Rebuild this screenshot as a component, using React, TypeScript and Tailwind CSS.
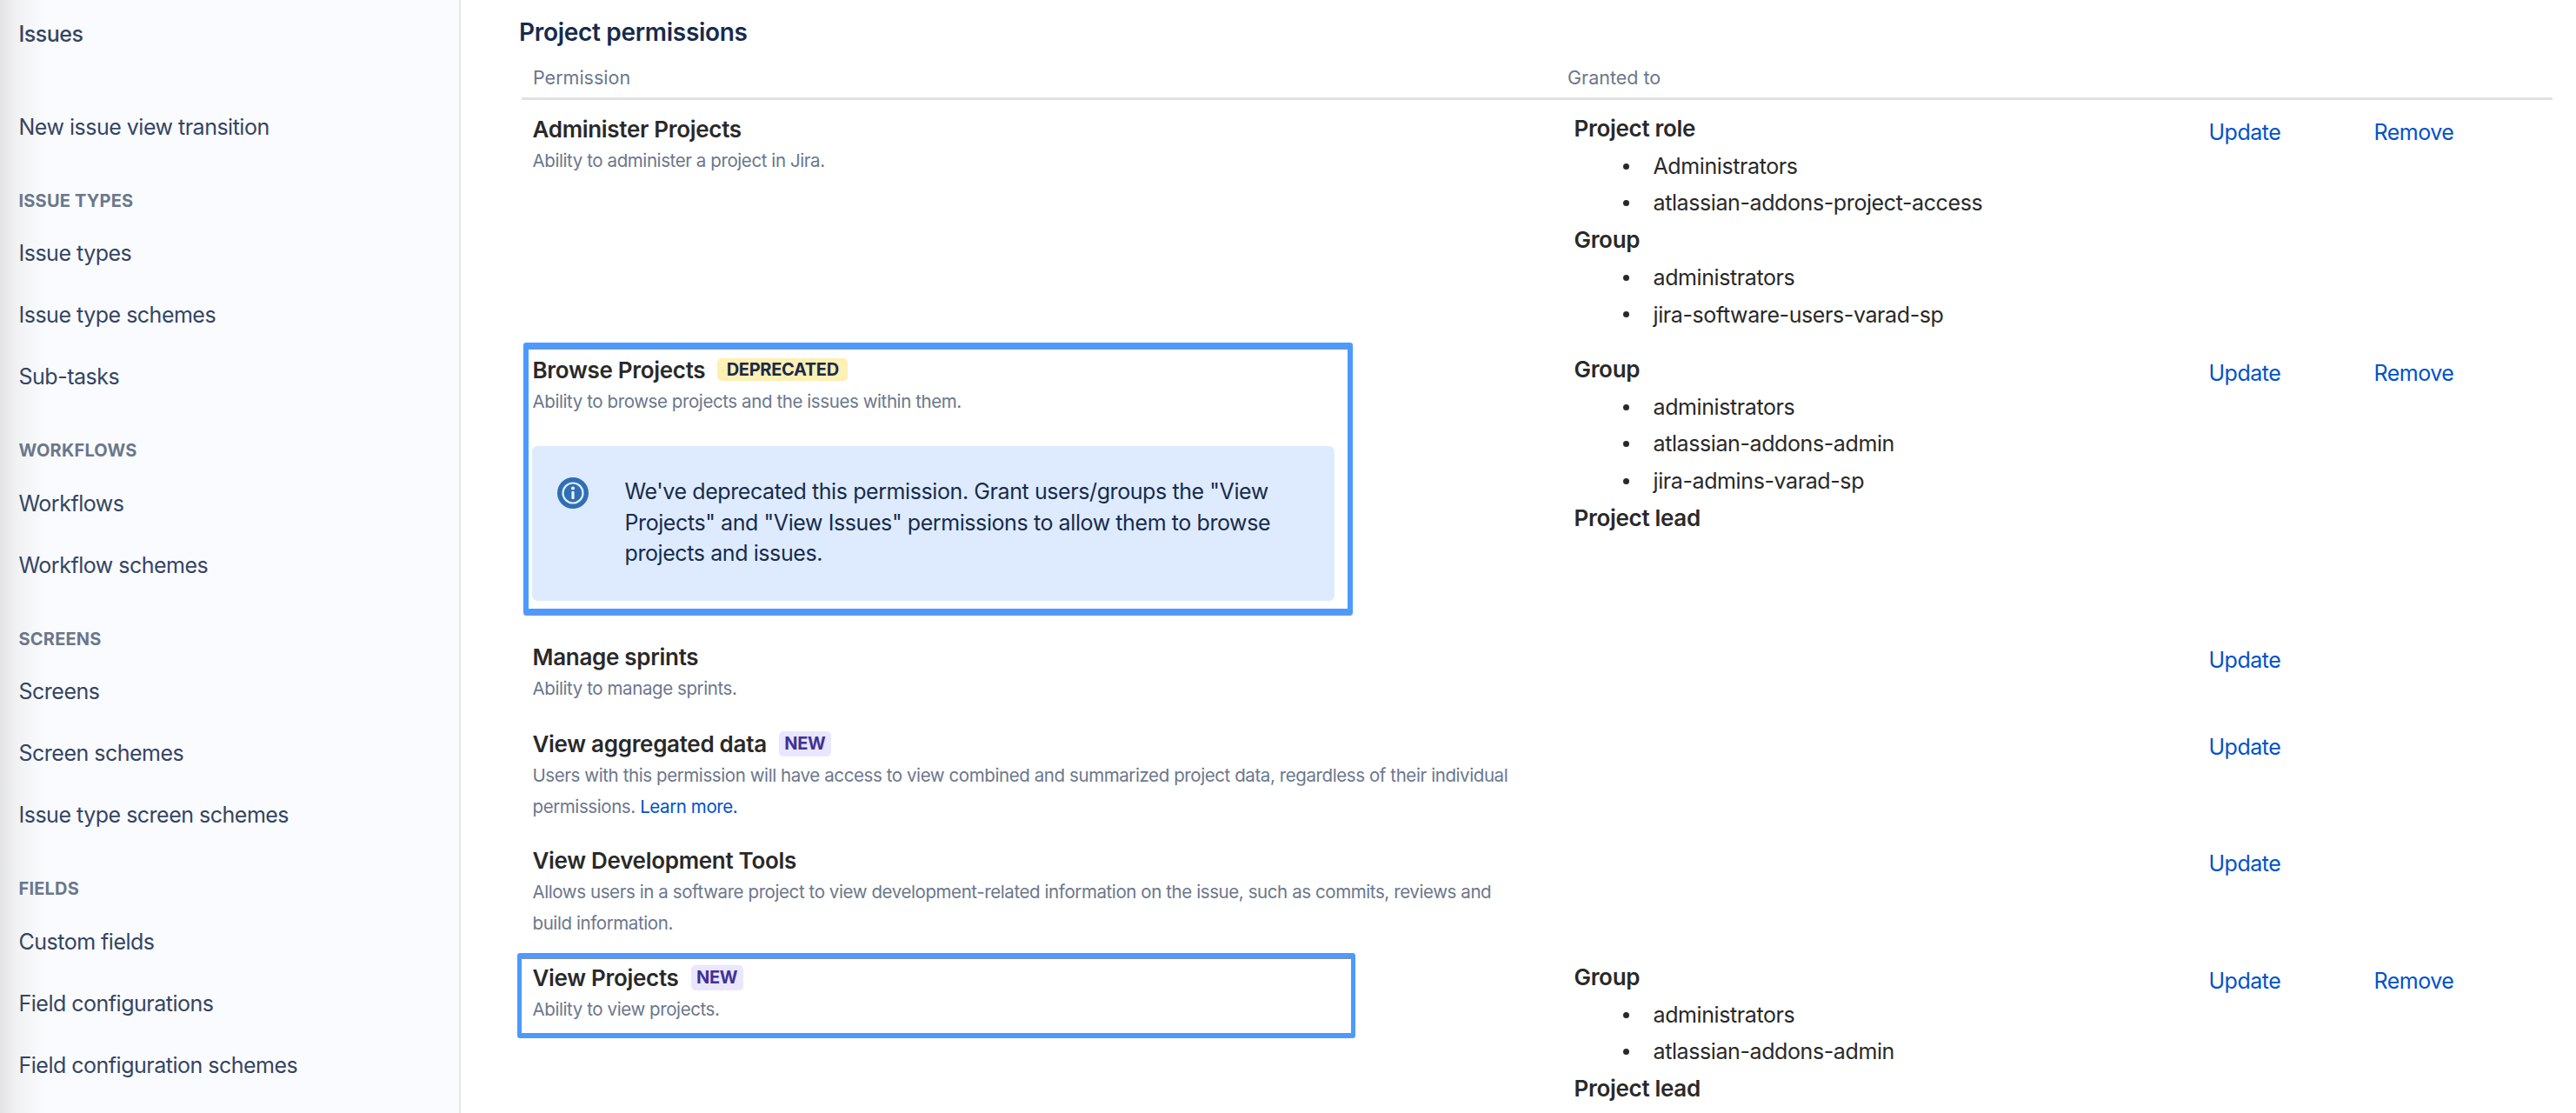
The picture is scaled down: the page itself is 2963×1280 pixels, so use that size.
import React from "react";

const NAV: { heading?: string; items: string[] }[] = [
  { heading: "ISSUE TYPES", items: ["Issue types", "Issue type schemes", "Sub-tasks"] },
  { heading: "WORKFLOWS", items: ["Workflows", "Workflow schemes"] },
  { heading: "SCREENS", items: ["Screens", "Screen schemes", "Issue type screen schemes"] },
  { heading: "FIELDS", items: ["Custom fields", "Field configurations", "Field configuration schemes"] },
];

function NavItem({ label, weight }: { label: string; weight?: string }) {
  return <div className={`flex h-[71px] items-center text-[25px] tracking-[-0.5px] text-[#344563] ${weight ?? ""}`}>{label}</div>;
}

function Sidebar() {
  return (
    <aside className="h-full w-[530px] shrink-0 overflow-hidden border-r-[2px] border-[#e6e7ea] bg-[linear-gradient(90deg,#e3e3e4_0px,#f1f2f3_20px,#fafbfe_52px)] pl-[21.5px] pt-[4px]">
      <NavItem label="Issues" weight="font-medium" />
      <div className="mt-[36px]">
        <NavItem label="New issue view transition" />
      </div>
      {NAV.map((s) => (
        <div key={s.heading} className="mt-[22.5px]">
          <div className="flex h-[52px] items-center text-[20px] font-bold tracking-[0.2px] text-[#6b778c]">{s.heading}</div>
          {s.items.map((i) => (
            <NavItem key={i} label={i} />
          ))}
        </div>
      ))}
    </aside>
  );
}

function Badge({ kind, children }: { kind: "new" | "deprecated"; children: React.ReactNode }) {
  const cls =
    kind === "new"
      ? "bg-[#eae6ff] text-[#403294] w-[60px] h-[29px]"
      : "bg-[#fff0b3] text-[#172b4d] w-[150px] h-[26px]";
  return (
    <span className={`inline-flex items-center justify-center rounded-[5px] text-[20px] font-bold ${cls}`}>{children}</span>
  );
}

function Perm({ title, badge, children }: { title: string; badge?: React.ReactNode; children?: React.ReactNode }) {
  return (
    <div>
      <div className="flex h-[36px] items-center gap-[14px] text-[26px] font-semibold tracking-[-0.3px] text-[#292929]">
        <span>{title}</span>
        {badge}
      </div>
      {children && <div className="mt-[1px] text-[20.5px] leading-[36px] tracking-[-0.41px] text-[#6b778c]">{children}</div>}
    </div>
  );
}

function Grants({ groups }: { groups: { label: string; items?: string[] }[] }) {
  return (
    <div className="pl-[8px] text-[25px] leading-[42.7px] tracking-[-0.4px] text-[#292929]">
      {groups.map((g, i) => (
        <div key={i}>
          <div className="text-[26px] font-semibold tracking-[-0.3px]">{g.label}</div>
          {g.items && (
            <ul className="list-none pl-[56px]">
              {g.items.map((x) => (
                <li key={x} className="flex items-center gap-[28px]">
                  <span className="h-[7px] w-[7px] rounded-full bg-[#292929]" />
                  {x}
                </li>
              ))}
            </ul>
          )}
        </div>
      ))}
    </div>
  );
}

function Row({
  h,
  left,
  groups,
  remove,
}: {
  h: string;
  left: React.ReactNode;
  groups?: { label: string; items?: string[] }[];
  remove?: boolean;
}) {
  return (
    <div className={`grid grid-cols-[1190px_738px_190px_1fr] pl-[12.5px] ${h}`}>
      <div className="pt-[15px]">{left}</div>
      <div className="pt-[12px]">{groups && <Grants groups={groups} />}</div>
      <div className="pt-[18.5px] text-[25px] leading-[36px] tracking-[-0.5px] text-[#0052cc]">Update</div>
      <div className="pt-[18.5px] text-[25px] leading-[36px] tracking-[-0.5px] text-[#0052cc]">{remove ? "Remove" : ""}</div>
    </div>
  );
}

function InfoIcon() {
  return (
    <svg width="36" height="36" viewBox="0 0 36 36" className="shrink-0">
      <circle cx="18" cy="18" r="18" fill="#2f6fb2" />
      <circle cx="18" cy="18" r="11.5" fill="none" stroke="#e3edfb" strokeWidth="2.2" />
      <circle cx="18" cy="12.5" r="2" fill="#eef4fd" />
      <rect x="16.4" y="16" width="3.2" height="9" rx="0.8" fill="#eef4fd" />
    </svg>
  );
}

export default function App() {
  return (
    <div className="relative flex h-[1280px] w-[2963px] overflow-hidden bg-white font-['Inter','Noto_Sans',sans-serif]">
      <Sidebar />
      <main className="min-w-0 flex-1 pl-[67px] pr-[27px]">
        <h2 className="flex h-[70px] items-center pt-[4px] text-[28px] font-semibold tracking-[-0.3px] text-[#172b4d]">Project permissions</h2>
        <div className="ml-[3px] grid h-[45px] grid-cols-[1190px_1fr] items-center border-b-[3px] border-[#dfe1e6] pb-[4px] pl-[13px] text-[21.5px] text-[#6b778c]">
          <span>Permission</span>
          <span>Granted to</span>
        </div>
        <div className="ml-[3px]">
          <Row
            h="h-[277px]"
            remove
            left={<Perm title="Administer Projects">Ability to administer a project in Jira.</Perm>}
            groups={[
              { label: "Project role", items: ["Administrators", "atlassian-addons-project-access"] },
              { label: "Group", items: ["administrators", "jira-software-users-varad-sp"] },
            ]}
          />
          <Row
            h="h-[330px]"
            remove
            left={
              <div>
                <Perm title="Browse Projects" badge={<Badge kind="deprecated">DEPRECATED</Badge>}>
                  Ability to browse projects and the issues within them.
                </Perm>
                <div className="mt-[33px] -ml-px flex h-[178px] w-[923px] items-start gap-[42px] rounded-[6px] bg-[#deebff] pl-[29px] pt-[36px]">
                  <InfoIcon />
                  <p className="-mt-[1px] w-[760px] text-[25px] leading-[35.5px] tracking-[-0.41px] text-[#172b4d]">
                    We've deprecated this permission. Grant users/groups the "View Projects" and "View Issues" permissions to allow them to browse projects and issues.
                  </p>
                </div>
              </div>
            }
            groups={[
              { label: "Group", items: ["administrators", "atlassian-addons-admin", "jira-admins-varad-sp"] },
              { label: "Project lead" },
            ]}
          />
          <Row h="h-[100px]" left={<Perm title="Manage sprints">Ability to manage sprints.</Perm>} />
          <Row
            h="h-[134px]"
            left={
              <Perm title="View aggregated data" badge={<Badge kind="new">NEW</Badge>}>
                Users with this permission will have access to view combined and summarized project data, regardless of their individual
                <br />
                permissions. <span className="text-[#0052cc]">Learn more.</span>
              </Perm>
            }
          />
          <Row
            h="h-[135px]"
            left={
              <Perm title="View Development Tools">
                Allows users in a software project to view development-related information on the issue, such as commits, reviews and
                <br />
                build information.
              </Perm>
            }
          />
          <Row
            h="h-[190px]"
            remove
            left={
              <Perm title="View Projects" badge={<Badge kind="new">NEW</Badge>}>
                Ability to view projects.
              </Perm>
            }
            groups={[
              { label: "Group", items: ["administrators", "atlassian-addons-admin"] },
              { label: "Project lead" },
            ]}
          />
        </div>
      </main>
      <div className="pointer-events-none absolute left-[602px] top-[394px] h-[313px] w-[954px] rounded-[3px] border-x-[6px] border-y-[7px] border-[#4c9aff] shadow-[0_1px_0_#8a8f98,inset_0_1px_0_#8a8f98]" />
      <div className="pointer-events-none absolute left-[595px] top-[1096px] h-[98px] w-[964px] rounded-[3px] border-x-[5px] border-y-[6px] border-[#4c9aff] shadow-[inset_0_1px_0_#8a8f98]" />
    </div>
  );
}
